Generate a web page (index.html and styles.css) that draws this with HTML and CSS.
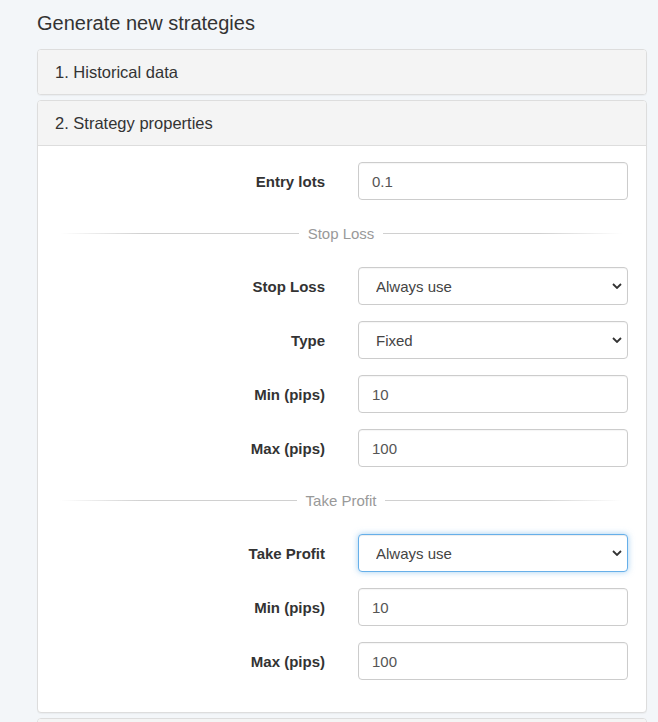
FILE: index.html
```html
<!DOCTYPE html>
<html lang="en">
<head>
<meta charset="utf-8">
<title>Generate new strategies</title>
<link rel="stylesheet" href="styles.css">
</head>
<body>
<div class="page">
  <h1 class="title">Generate new strategies</h1>
  <div class="panel-group">
    <div class="panel">
      <div class="panel-heading">1. Historical data</div>
    </div>
    <div class="panel">
      <div class="panel-heading open">2. Strategy properties</div>
      <div class="panel-body">
        <div class="row">
          <label class="label">Entry lots</label>
          <input class="control" type="text" value="0.1">
        </div>
        <div class="sep"><span class="line left"></span><span class="sep-text">Stop Loss</span><span class="line right"></span></div>
        <div class="row">
          <label class="label">Stop Loss</label>
          <div class="select-wrap">
            <select class="control select"><option>Always use</option></select>
            <svg class="chev" width="10" height="6" viewBox="0 0 10 6"><path d="M1 1 L5 5 L9 1" fill="none" stroke="#333" stroke-width="1.8"/></svg>
          </div>
        </div>
        <div class="row">
          <label class="label">Type</label>
          <div class="select-wrap">
            <select class="control select"><option>Fixed</option></select>
            <svg class="chev" width="10" height="6" viewBox="0 0 10 6"><path d="M1 1 L5 5 L9 1" fill="none" stroke="#333" stroke-width="1.8"/></svg>
          </div>
        </div>
        <div class="row">
          <label class="label">Min (pips)</label>
          <input class="control" type="text" value="10">
        </div>
        <div class="row">
          <label class="label">Max (pips)</label>
          <input class="control" type="text" value="100">
        </div>
        <div class="sep"><span class="line left"></span><span class="sep-text">Take Profit</span><span class="line right"></span></div>
        <div class="row">
          <label class="label">Take Profit</label>
          <div class="select-wrap">
            <select class="control select focus"><option>Always use</option></select>
            <svg class="chev" width="10" height="6" viewBox="0 0 10 6"><path d="M1 1 L5 5 L9 1" fill="none" stroke="#333" stroke-width="1.8"/></svg>
          </div>
        </div>
        <div class="row">
          <label class="label">Min (pips)</label>
          <input class="control" type="text" value="10">
        </div>
        <div class="row">
          <label class="label">Max (pips)</label>
          <input class="control" type="text" value="100">
        </div>
      </div>
    </div>
    <div class="panel">
      <div class="panel-heading empty"></div>
    </div>
  </div>
</div>
</body>
</html>
```
FILE: styles.css
```css
* { box-sizing: border-box; }
html, body {
  margin: 0;
  padding: 0;
  background: #f3f6f9;
  font-family: "Liberation Sans", Arial, sans-serif;
  color: #333;
  overflow: hidden;
}
.page {
  padding: 12px 11px 0 37px;
}
.title {
  margin: 0;
  font-size: 20px;
  line-height: 22px;
  font-weight: normal;
  color: #333;
}
.panel-group {
  margin-top: 15px;
  display: flex;
  flex-direction: column;
  gap: 5px;
}
.panel {
  background: #fff;
  border: 1px solid #ddd;
  border-radius: 4px;
  box-shadow: 0 1px 1px rgba(0,0,0,0.04);
  overflow: hidden;
}
.panel-heading {
  background: #f4f4f4;
  padding: 13px 17px;
  font-size: 16.5px;
  line-height: 18px;
  color: #333;
}
.panel-heading.empty {
  height: 44px;
}
.panel-heading.open {
  border-bottom: 1px solid #ddd;
}
.panel-body {
  display: flex;
  flex-direction: column;
  padding: 16px 18px 16px 18px;
}
.row {
  display: grid;
  grid-template-columns: 1fr 270px;
  column-gap: 33px;
  align-items: center;
  margin-bottom: 16px;
}
.label {
  text-align: right;
  font-weight: bold;
  font-size: 15px;
  color: #333;
}
.control {
  display: block;
  width: 270px;
  height: 38px;
  border: 1px solid #ccc;
  border-radius: 4px;
  background: #fff;
  padding: 0 13px;
  font-family: "Liberation Sans", Arial, sans-serif;
  font-size: 15px;
  color: #555;
  box-shadow: inset 0 1px 1px rgba(0,0,0,0.04);
  outline: none;
}
.select-wrap {
  position: relative;
  width: 270px;
}
.select {
  -webkit-appearance: none;
  appearance: none;
  padding-left: 17px;
  color: #444;
}
.select.focus {
  border-color: #66afe9;
  box-shadow: inset 0 1px 1px rgba(0,0,0,0.075), 0 0 6px rgba(102,175,233,0.6);
}
.chev {
  position: absolute;
  right: 6px;
  top: 16px;
  pointer-events: none;
}
.sep {
  display: flex;
  align-items: center;
  height: 20px;
  margin: 7px 6px 24px 4px;
}
.line {
  flex: 1;
  height: 1px;
}
.line.left {
  background: linear-gradient(to right, rgba(210,210,210,0), #d0d0d0 35%);
}
.line.right {
  background: linear-gradient(to left, rgba(210,210,210,0), #d0d0d0 35%);
}
.sep-text {
  padding: 0 9px;
  font-size: 15px;
  color: #999;
}
```
